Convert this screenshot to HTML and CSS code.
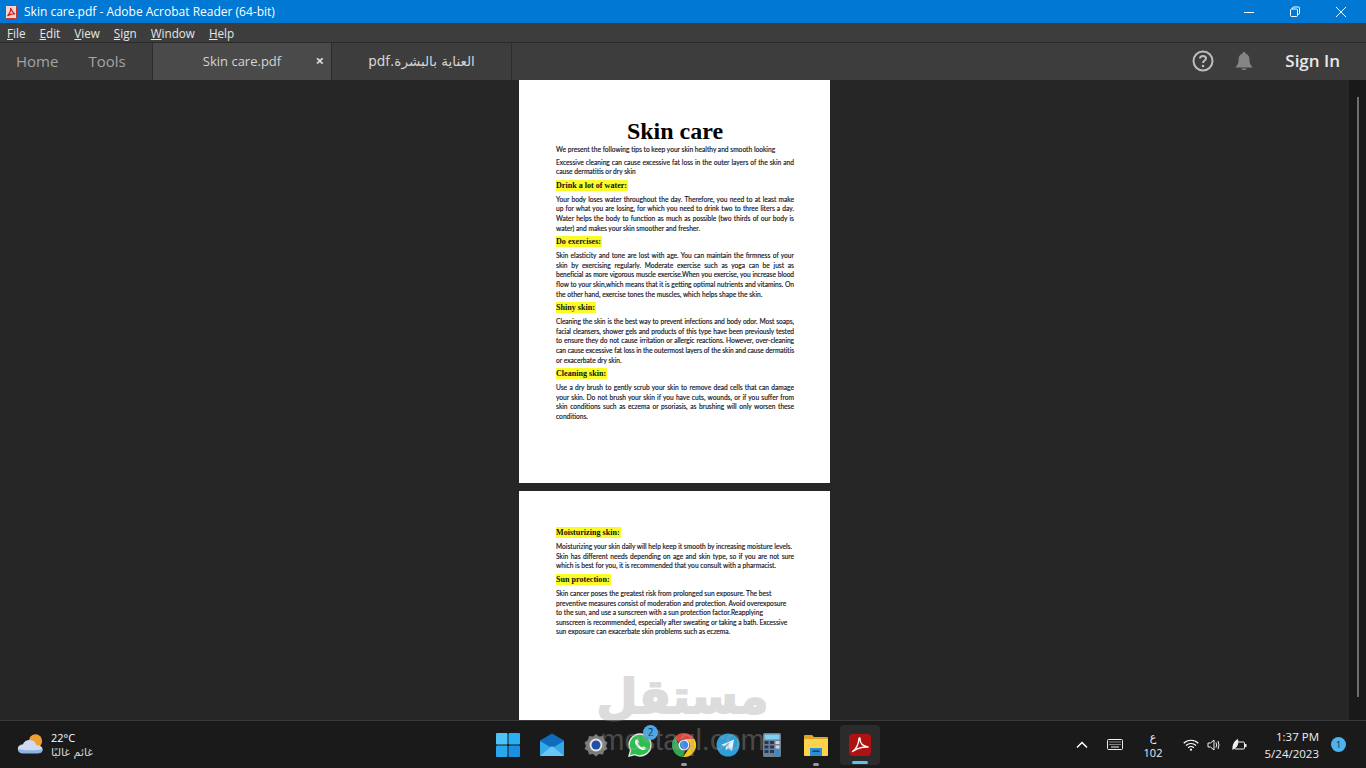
FILE: index.html
```html
<!DOCTYPE html>
<html lang="en">
<head>
  <meta charset="UTF-8" />
  <title>Skin care.pdf - Adobe Acrobat Reader (64-bit)</title>
  <link rel="stylesheet" href="styles.css">
</head>
<body>
  <div class="titlebar">
    <svg class="app-icon" width="12" height="14" viewBox="0 0 12 14"><rect x="0.5" y="0.5" width="11" height="13" rx="1" fill="#f4d6d2" stroke="#c9302c"/><path d="M2.5 11 C5 8 6 5 5.6 3 C7 6 8 8 10 9 C7.5 8.6 5 9.2 2.5 11 Z" fill="none" stroke="#d0201c" stroke-width="1.2"/></svg>
    <span class="title-text">Skin care.pdf - Adobe Acrobat Reader (64-bit)</span>
    <div class="win-controls">
      <svg width="12" height="12" viewBox="0 0 12 12"><path d="M1 6.5H11" stroke="#fff"/></svg>
      <svg width="12" height="12" viewBox="0 0 12 12"><rect x="1.5" y="3" width="7" height="7.5" rx="1" fill="none" stroke="#fff"/><path d="M3.5 3V2.2Q3.5 1 4.7 1H9.5Q10.5 1 10.5 2V7.500Q10.500 8.500 8.500 8.500" fill="none" stroke="#fff"/></svg>
      <svg width="12" height="12" viewBox="0 0 12 12"><path d="M1 1L11 11M11 1L1 11" stroke="#fff"/></svg>
    </div>
  </div>

  <div class="menubar">
    <span><u>F</u>ile</span>
    <span><u>E</u>dit</span>
    <span><u>V</u>iew</span>
    <span><u>S</u>ign</span>
    <span><u>W</u>indow</span>
    <span><u>H</u>elp</span>
  </div>

  <div class="tabbar">
    <div class="nav-tabs">
      <span class="nav-home">Home</span>
      <span class="nav-tools">Tools</span>
    </div>
    <div class="doc-tab active">
      <span>Skin care.pdf</span>
      <span class="tab-close">×</span>
    </div>
    <div class="doc-tab">
      <span dir="rtl" class="arabic tab-ar">العناية بالبشرة.pdf</span>
    </div>
    <div class="tab-tools">
      <svg width="22" height="22" viewBox="0 0 22 22"><circle cx="11" cy="11" r="9.500" fill="none" stroke="#bdbdbd" stroke-width="2"/><path d="M8 8.500Q8 6 11 6T14 8.500C14 10.500 11 10.500 11 13" fill="none" stroke="#bdbdbd" stroke-width="2"/><circle cx="11" cy="16" r="1.300" fill="#bdbdbd"/></svg>
      <svg class="bell" width="18" height="20" viewBox="0 0 18 20"><path d="M9 1C10 1 10.500 1.700 10.500 2.500C13.500 3.300 14.500 6 14.500 9C14.500 12.500 15.500 14 17 15.500V16.500H1V15.500C2.500 14 3.500 12.500 3.500 9C3.500 6 4.500 3.300 7.500 2.500C7.500 1.700 8 1 9 1Z" fill="#858585"/><path d="M6.500 17.500H11.500C11 19.500 7 19.500 6.500 17.500Z" fill="#858585"/></svg>
      <span class="sign-in">Sign In</span>
    </div>
  </div>

  <div class="workspace">
    <div class="viewer">
      <div class="page page-one">
        <h1>Skin care</h1>
        <p class="first"><span class="ln">We present the following tips to keep your skin healthy and smooth looking</span></p>
        <p class="second"><span class="jl">Excessive cleaning can cause excessive fat loss in the outer layers of the skin and</span><span class="ln">cause dermatitis or dry skin</span></p>
        <h2><mark>Drink a lot of water:</mark></h2>
        <p><span class="jl">Your body loses water throughout the day. Therefore, you need to at least make</span><span class="jl">up for what you are losing, for which you need to drink two to three liters a day.</span><span class="jl">Water helps the body to function as much as possible (two thirds of our body is</span><span class="ln">water) and makes your skin smoother and fresher.</span></p>
        <h2><mark>Do exercises:</mark></h2>
        <p><span class="jl">Skin elasticity and tone are lost with age. You can maintain the firmness of your</span><span class="jl">skin by exercising regularly. Moderate exercise such as yoga can be just as</span><span class="jl tight">beneficial as more vigorous muscle exercise.When you exercise, you increase blood</span><span class="jl">flow to your skin,which means that it is getting optimal nutrients and vitamins. On</span><span class="ln">the other hand, exercise tones the muscles, which helps shape the skin.</span></p>
        <h2><mark>Shiny skin:</mark></h2>
        <p><span class="jl tight">Cleaning the skin is the best way to prevent infections and body odor. Most soaps,</span><span class="jl tight">facial cleansers, shower gels and products of this type have been previously tested</span><span class="jl tight">to ensure they do not cause irritation or allergic reactions. However, over-cleaning</span><span class="jl tight">can cause excessive fat loss in the outermost layers of the skin and cause dermatitis</span><span class="ln">or exacerbate dry skin.</span></p>
        <h2><mark>Cleaning skin:</mark></h2>
        <p><span class="jl">Use a dry brush to gently scrub your skin to remove dead cells that can damage</span><span class="jl">your skin. Do not brush your skin if you have cuts, wounds, or if you suffer from</span><span class="jl">skin conditions such as eczema or psoriasis, as brushing will only worsen these</span><span class="ln">conditions.</span></p>
      </div>
      <div class="page page-two">
        <h2><mark>Moisturizing skin:</mark></h2>
        <p><span class="ln">Moisturizing your skin daily will help keep it smooth by increasing moisture levels.</span><span class="jl">Skin has different needs depending on age and skin type, so if you are not sure</span><span class="ln">which is best for you, it is recommended that you consult with a pharmacist.</span></p>
        <h2><mark>Sun protection:</mark></h2>
        <p><span class="ln">Skin cancer poses the greatest risk from prolonged sun exposure. The best</span><span class="ln">preventive measures consist of moderation and protection. Avoid overexposure</span><span class="ln">to the sun, and use a sunscreen with a sun protection factor.Reapplying</span><span class="ln">sunscreen is recommended, especially after sweating or taking a bath. Excessive</span><span class="ln">sun exposure can exacerbate skin problems such as eczema.</span></p>
      </div>
    </div>
    <div class="scrollbar"><div class="thumb"></div></div>
  </div>

  <div class="taskbar">
    <div class="weather">
      <svg width="30" height="23" viewBox="0 0 34 26"><circle cx="21" cy="9" r="7.500" fill="#f0a030"/><path d="M7 23C3 23 1 20.500 1 18C1 15 3.500 13 6.500 13C8 9.500 11 8 14 8C18.500 8 21.500 10.500 22 14C26 13.500 29 15.500 29 18.500C29 21.500 27 23 24 23Z" fill="#cfdcf0"/><path d="M7 23C3 23 1 20.500 1 18C8 20 20 20 29 18.500C29 21.500 27 23 24 23Z" fill="#8fb2e6"/></svg>
      <div class="weather-text">
        <div>22°C</div>
        <div class="arabic weather-sub" dir="rtl">غائم غالبًا</div>
      </div>
    </div>

    <div class="task-icons">
      <div class="task-icon">
        <svg width="24" height="24" viewBox="0 0 24 24"><rect x="0" y="0" width="11.500" height="11.500" rx="1" fill="#4fc3f7"/><rect x="12.500" y="0" width="11.500" height="11.500" rx="1" fill="#29b0f2"/><rect x="0" y="12.500" width="11.500" height="11.500" rx="1" fill="#29a6ee"/><rect x="12.500" y="12.500" width="11.500" height="11.500" rx="1" fill="#1a8fe3"/></svg>
      </div>
      <div class="task-icon">
        <svg width="24" height="24" viewBox="0 0 24 24"><path d="M0 7.500L12 0.500L24 7.500V23H0Z" fill="#0f6cbd"/><path d="M0 8L12 15L24 8V22Q24 23 23 23H1Q0 23 0 22Z" fill="#35a8e8"/><path d="M0 23L12 13L24 23Z" fill="#69c6f5"/></svg>
      </div>
      <div class="task-icon">
        <svg width="24" height="24" viewBox="0 0 24 24"><path d="M12 1L15 3.500L19 3L20 7L23.500 9.500L22 13L23.500 16L20 18L19 21.500L15 21L12 23.500L9 21L5 21.500L4 18L0.500 16L2 13L0.500 9.500L4 7L5 3L9 3.500Z" fill="#7b7b7b"/><circle cx="12" cy="12" r="6.500" fill="#e6e6e6"/><circle cx="12" cy="12" r="4.500" fill="#1f4fa8"/></svg>
      </div>
      <div class="task-icon">
        <svg width="24" height="24" viewBox="0 0 24 24"><path d="M1 23L2.600 17C1.500 15.300 1 13.600 1 12C1 5.800 6 1 12 1C18.200 1 23 6 23 12C23 18.200 18 23 12 23C10.200 23 8.500 22.500 7 21.600Z" fill="#29c04c" stroke="#e8e8e8" stroke-width="1.300"/><path d="M8 6.500C6.800 7.500 6.500 9.500 8 12C9.500 14.500 12.500 17 15.500 17C17 17 18 15.800 18 14.800L15.500 13.300L14 14.500C12.500 14 10.500 12 10 10.300L11 9L9.800 6.500Z" fill="#fff"/></svg>
        <span class="count-badge">2</span>
      </div>
      <div class="task-icon">
        <svg width="24" height="24" viewBox="0 0 24 24"><path d="M12 0A12 12 0 0 1 22.400 6H12A6 6 0 0 0 6.600 9.500L2.800 4.300A12 12 0 0 1 12 0Z" fill="#e5423a"/><path d="M22.400 6A12 12 0 0 1 11 24L16.500 16A6 6 0 0 0 17 9L12 6Z" fill="#f8c61e"/><path d="M2.800 4.300L7.500 12A5 5 0 0 0 13 17.700L11 24A12 12 0 0 1 2.800 4.300Z" fill="#2fa84f"/><circle cx="12" cy="12" r="5.500" fill="#f2f2f2"/><circle cx="12" cy="12" r="4.200" fill="#3f86ee"/></svg>
        <span class="run-dot"></span>
      </div>
      <div class="task-icon">
        <svg width="24" height="24" viewBox="0 0 24 24"><circle cx="12" cy="12" r="11.500" fill="#2d9fd9"/><path d="M5 12L18 6.500L16 18L12 15.300L10 17.300L9.600 14L15 9L8 13.300Z" fill="#e8f4fb"/></svg>
      </div>
      <div class="task-icon">
        <svg width="18" height="24" viewBox="0 0 18 24"><rect width="18" height="24" rx="1.500" fill="#6f7f90"/><rect x="1.500" y="1.500" width="15" height="5" fill="#7ed0f2"/><g fill="#1f3a5c"><rect x="1.500" y="8" width="4" height="3"/><rect x="7" y="8" width="4" height="3"/><rect x="1.500" y="12.500" width="4" height="3"/><rect x="7" y="12.500" width="4" height="3"/><rect x="1.500" y="17" width="4" height="3"/><rect x="7" y="17" width="4" height="3"/></g><g fill="#cfd6de"><rect x="12.500" y="8" width="4" height="3"/><rect x="12.500" y="12.500" width="4" height="3"/></g><rect x="12.500" y="17" width="4" height="5.500" fill="#2d8fd9"/></svg>
      </div>
      <div class="task-icon">
        <svg width="24" height="22" viewBox="0 0 24 22"><path d="M0 2Q0 1 1 1H8L10 3H23Q24 3 24 4V8H0Z" fill="#e0a526"/><rect x="0" y="5" width="24" height="17" rx="1" fill="#fbd34d"/><rect x="6" y="14" width="12" height="8" fill="#2b8fd8"/><rect x="8.500" y="16.500" width="7" height="1.500" fill="#123f6e"/></svg>
        <span class="run-dot"></span>
      </div>
      <div class="task-icon selected">
        <svg width="22" height="22" viewBox="0 0 22 22"><rect width="22" height="22" rx="4" fill="#b01212"/><path d="M3.500 17.500C7 15 9.500 10 10 4.500C10.300 3.500 11 3.800 11 5C11 9 14 12 19 13C14.500 12.800 8.500 14 3.500 17.500Z" fill="none" stroke="#fff" stroke-width="1.400" stroke-linejoin="round"/></svg>
        <span class="active-line"></span>
      </div>
    </div>

    <div class="tray">
      <svg class="tray-chevron" width="12" height="8" viewBox="0 0 12 8"><path d="M1 6.500L6 1.500L11 6.500" fill="none" stroke="#fff" stroke-width="1.500"/></svg>
      <svg class="tray-keys" width="16" height="11" viewBox="0 0 16 11"><rect x="0.500" y="0.500" width="15" height="10" rx="1" fill="none" stroke="#eee"/><path d="M2.500 3H13.500M2.500 5.500H13.500" stroke="#eee" stroke-dasharray="1 1"/><path d="M4 8H12" stroke="#eee"/></svg>
      <div class="tray-lang">
        <div class="arabic">ع</div>
        <div>102</div>
      </div>
      <svg class="tray-wifi" width="16" height="12" viewBox="0 0 16 12"><path d="M0.700 4.200A10.500 10.500 0 0 1 15.300 4.200M3 6.500A7.200 7.200 0 0 1 13 6.500M5.200 8.700A4 4 0 0 1 10.800 8.700" fill="none" stroke="#fff" stroke-width="1.200"/><circle cx="8" cy="10.700" r="1.100" fill="#fff"/></svg>
      <svg class="tray-vol" width="15" height="14" viewBox="0 0 15 14"><path d="M1 5V9H3.500L7 12V2L3.500 5Z" fill="none" stroke="#eee"/><path d="M9 4.500Q10.500 7 9 9.500M11 3Q13 7 11 11" fill="none" stroke="#eee"/></svg>
      <svg class="tray-batt" width="17" height="14" viewBox="0 0 17 14"><rect x="3.500" y="4" width="10" height="7" rx="1" fill="none" stroke="#eee"/><rect x="14" y="6" width="1.500" height="3" fill="#eee"/><path d="M1.500 12C1 7 3 3 7 1C8 5 7 9 3 11Z" fill="#eee"/></svg>
      <div class="clock">
        <div>1:37 PM</div>
        <div>5/24/2023</div>
      </div>
      <span class="notify">1</span>
    </div>
  </div>

  <!-- site watermark sits on top of the whole shot -->
  <div class="watermark">
    <div class="wm-word" dir="rtl">مستقل</div>
    <div class="wm-url">mostaql.com</div>
  </div>
</body>
</html>
```

FILE: styles.css
```css
* {
  box-sizing: border-box;
}
html, body {
  margin: 0;
  height: 768px;
  overflow: hidden;
}
body {
  width: 1366px;
  font-family: "Open Sans", "Liberation Sans", sans-serif;
  background: #262626;
  color: #fff;
  display: flex;
  flex-direction: column;
  position: relative;
}
.arabic {
  font-family: "DejaVu Sans", sans-serif;
}

/* title bar */
.titlebar {
  height: 23px;
  background: #0078d4;
  display: flex;
  align-items: center;
  padding-left: 5px;
  font-size: 12px;
}
.app-icon {
  flex: none;
}
.title-text {
  margin-left: 7px;
  flex: 1;
}
.win-controls {
  display: flex;
  gap: 34px;
  padding-right: 19px;
}

/* menu */
.menubar {
  height: 20px;
  background: #3d3d3d;
  border-bottom: 1px solid #2b2b2b;
  display: flex;
  align-items: center;
  gap: 14px;
  padding-left: 7px;
  font-size: 11.700px;
  color: #e6e6e6;
}

/* tabs */
.tabbar {
  height: 37px;
  background: #3d3d3d;
  display: flex;
  color: #d4d4d4;
  font-size: 13px;
}
.nav-tabs {
  width: 152px;
  display: flex;
  align-items: center;
  padding: 0 0 2px 16px;
  gap: 30px;
  font-size: 15px;
  color: #a4a4a4;
}
.doc-tab {
  width: 180px;
  height: 37px;
  border-right: 1px solid #2c2c2c;
  display: flex;
  align-items: center;
  justify-content: center;
  padding-bottom: 2px;
  position: relative;
}
.doc-tab.active {
  background: #4a4a4a;
  border-left: 1px solid #2c2c2c;
}
.tab-ar {
  font-size: 13.500px;
}
.tab-close {
  position: absolute;
  right: 7px;
  top: 7px;
  font-size: 15px;
  font-weight: 700;
  color: #ddd;
}
.tab-tools {
  flex: 1;
  display: flex;
  align-items: center;
  justify-content: flex-end;
  padding: 0 26px 2px 0;
}
.bell {
  margin-left: 21px;
}
.sign-in {
  margin-left: 32px;
  font-size: 17px;
  font-weight: 600;
  color: #e8e8e8;
}

/* document area */
.workspace {
  height: 640px;
  display: flex;
  overflow: hidden;
}
.viewer {
  flex: 1;
  display: flex;
  flex-direction: column;
  align-items: center;
  gap: 8px;
}
.page {
  width: 311px;
  flex: none;
  background: #fff;
  padding: 0 36px 0 37px;
  color: #15151f;
  font-family: Lato, "Liberation Sans", sans-serif;
  font-size: 6.650px;
  line-height: 9.550px;
  -webkit-text-stroke: 0.15px #15151f;
}
.page-one {
  height: 403px;
  padding-top: 37px;
}
.page-two {
  height: 240px;
  padding-top: 36px;
}
.page h1 {
  margin: 0;
  height: 28px;
  font: 700 24px/28px "Liberation Serif", serif;
  color: #000;
  -webkit-text-stroke: 0;
  text-align: center;
}
.page h2 {
  margin: 3px 0 0;
  height: 11px;
  font: 700 8.100px/11px "Liberation Serif", serif;
  color: #111;
  -webkit-text-stroke: 0;
}
.page-two h2:first-child {
  margin-top: 0;
}
.page mark {
  background: #fbfb2a;
  color: inherit;
  padding: 0 1px 0 0;
  display: inline-block;
  height: 11px;
}
.page p {
  margin: 4.250px 0 0;
}
.page p.first {
  margin-top: 0;
}
.page p.second {
  margin-top: 3px;
}
.ln, .jl {
  display: block;
  white-space: nowrap;
}
.jl {
  white-space: normal;
  text-align: justify;
  text-align-last: justify;
}
.tight {
  letter-spacing: -0.060px;
}
.scrollbar {
  width: 17px;
  background: #191919;
  padding: 17px 0 0 8px;
}
.thumb {
  width: 2px;
  height: 600px;
  background: #6e6e6e;
}

/* taskbar */
.taskbar {
  height: 48px;
  background: #1a1a1a;
  border-top: 1px solid #3a3a3a;
  display: grid;
  grid-template-columns: 486px 396px 1fr;
  align-items: center;
}
.weather {
  display: flex;
  align-items: center;
  padding-left: 17px;
  gap: 4px;
  font-size: 11px;
  line-height: 15px;
}
.weather-sub {
  font-size: 11px;
  color: #d8d8d8;
}
.task-icons {
  display: flex;
  height: 47px;
  align-items: center;
}
.task-icon {
  width: 44px;
  height: 40px;
  display: flex;
  align-items: center;
  justify-content: center;
  position: relative;
}
.task-icon.selected {
  width: 40px;
  margin-left: 2px;
  background: #2b2b2b;
  border-radius: 4px;
}
.count-badge {
  position: absolute;
  top: 0;
  right: 4px;
  width: 15px;
  height: 15px;
  border-radius: 50%;
  background: #4aa8e8;
  color: #10243a;
  font-size: 10px;
  line-height: 15px;
  text-align: center;
}
.run-dot {
  position: absolute;
  bottom: -1px;
  left: 19px;
  width: 6px;
  height: 3px;
  border-radius: 2px;
  background: #9a9a9a;
}
.active-line {
  position: absolute;
  bottom: 1px;
  left: 12px;
  width: 16px;
  height: 3px;
  border-radius: 2px;
  background: #5cc0f2;
}
.tray {
  display: flex;
  align-items: center;
  padding-left: 194px;
  font-size: 11px;
  color: #eee;
}
.tray-keys {
  margin-left: 19px;
}
.tray-lang {
  margin-left: 10px;
  width: 40px;
  text-align: center;
  line-height: 15px;
}
.tray-wifi {
  margin-left: 10px;
}
.tray-vol {
  margin-left: 8px;
}
.tray-batt {
  margin-left: 9px;
}
.clock {
  margin-left: 14px;
  width: 57px;
  flex: none;
  text-align: right;
  line-height: 17px;
  font-size: 11.500px;
}
.notify {
  margin-left: 12px;
  width: 15px;
  height: 15px;
  flex: none;
  border-radius: 50%;
  background: #4cb2f0;
  color: #10243a;
  font-size: 9px;
  line-height: 15px;
  text-align: center;
}

/* watermark */
.watermark {
  position: absolute;
  left: 590px;
  top: 671px;
  width: 185px;
  text-align: center;
  color: #a0a0a0;
  opacity: 0.36;
  pointer-events: none;
}
.wm-word {
  font: 700 47px/52px "DejaVu Sans", sans-serif;
  height: 52px;
  -webkit-text-stroke: 2px #a0a0a0;
}
.wm-url {
  font: 400 29px/34px "Liberation Sans", sans-serif;
}
```
